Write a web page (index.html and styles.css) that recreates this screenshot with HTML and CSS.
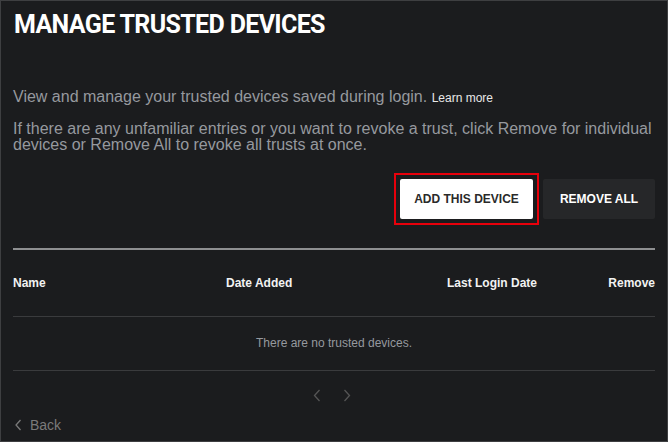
FILE: index.html
```html
<!DOCTYPE html>
<html lang="en">
<head>
<meta charset="utf-8">
<title>Manage Trusted Devices</title>
<link rel="stylesheet" href="styles.css">
</head>
<body>
<div class="panel">
  <h1 class="title">MANAGE TRUSTED DEVICES</h1>
  <p class="intro">View and manage your trusted devices saved during login. <a class="learn" href="#">Learn more</a></p>
  <p class="note">If there are any unfamiliar entries or you want to revoke a trust, click Remove for individual devices or Remove All to revoke all trusts at once.</p>
  <div class="actions">
    <span class="focus-ring"><button class="btn btn-light">ADD THIS DEVICE</button></span>
    <button class="btn btn-dark">REMOVE ALL</button>
  </div>
  <div class="divider"></div>
  <div class="thead">
    <span>Name</span>
    <span>Date Added</span>
    <span>Last Login Date</span>
    <span class="right">Remove</span>
  </div>
  <div class="empty">There are no trusted devices.</div>
  <div class="pager">
    <svg width="8" height="13" viewBox="0 0 8 13"><path d="M6.5 1 L1.5 6.5 L6.5 12" fill="none" stroke="#555" stroke-width="1.3"/></svg>
    <svg width="8" height="13" viewBox="0 0 8 13"><path d="M1.5 1 L6.5 6.5 L1.5 12" fill="none" stroke="#555" stroke-width="1.3"/></svg>
  </div>
  <a class="back" href="#">
    <svg width="7" height="12" viewBox="0 0 7 12"><path d="M5.5 1 L1 6 L5.5 11" fill="none" stroke="#7a7a7a" stroke-width="1.3"/></svg>
    <span>Back</span>
  </a>
</div>
</body>
</html>
```

FILE: styles.css
```css
html, body {
  margin: 0;
  padding: 0;
  background: #1b1c1e;
}
.panel {
  box-sizing: border-box;
  width: 668px;
  height: 442px;
  border: 1px solid #3e3f41;
  background: #1b1c1e;
  padding: 9px 12px 0 12px;
  font-family: "Liberation Sans", Arial, sans-serif;
  overflow: hidden;
}
.title {
  margin: 0 0 0 1px;
  font-family: Roboto, "Liberation Sans", sans-serif;
  font-weight: 700;
  font-size: 25px;
  line-height: 30px;
  color: #ffffff;
  letter-spacing: -0.65px;
}
.intro {
  margin: 48px 0 0 0;
  font-size: 16px;
  line-height: 18px;
  color: #96999e;
}
.learn {
  font-size: 12px;
  color: #e8e8e8;
  text-decoration: none;
}
.note {
  margin: 14px 0 0 0;
  font-size: 16px;
  line-height: 16px;
  color: #96999e;
}
.actions {
  display: flex;
  justify-content: flex-end;
  align-items: center;
  gap: 4px;
  margin-top: 20px;
}
.focus-ring {
  display: block;
  border: 2px solid #e8000b;
  padding: 4px;
}
.btn {
  display: block;
  height: 40px;
  border: none;
  border-radius: 2px;
  font-family: "Liberation Sans", Arial, sans-serif;
  font-weight: 700;
  font-size: 12px;
  padding: 0;
  cursor: pointer;
}
.btn-light {
  width: 133px;
  background: #ffffff;
  color: #2a2a2a;
}
.btn-dark {
  width: 112px;
  background: #262729;
  color: #ffffff;
}
.divider {
  margin-top: 23px;
  height: 2px;
  background: #8e8f91;
}
.thead {
  display: grid;
  grid-template-columns: 213px 221px 1fr auto;
  padding: 26px 0;
  font-size: 12px;
  line-height: 14px;
  font-weight: 700;
  color: #f2f2f2;
  border-bottom: 1px solid #3a3b3d;
}
.thead .right {
  text-align: right;
}
.empty {
  padding: 19px 0 20px;
  text-align: center;
  font-size: 12px;
  line-height: 14px;
  color: #96999e;
  border-bottom: 1px solid #3a3b3d;
}
.pager {
  display: flex;
  justify-content: center;
  gap: 22px;
  margin-top: 18px;
  padding-right: 4px;
  height: 13px;
}
.pager svg {
  display: block;
}
.back {
  display: flex;
  align-items: center;
  gap: 8px;
  margin-top: 15px;
  margin-left: 2px;
  font-size: 14px;
  line-height: 16px;
  color: #7a7a7a;
  text-decoration: none;
}
.back svg {
  display: block;
}
```
